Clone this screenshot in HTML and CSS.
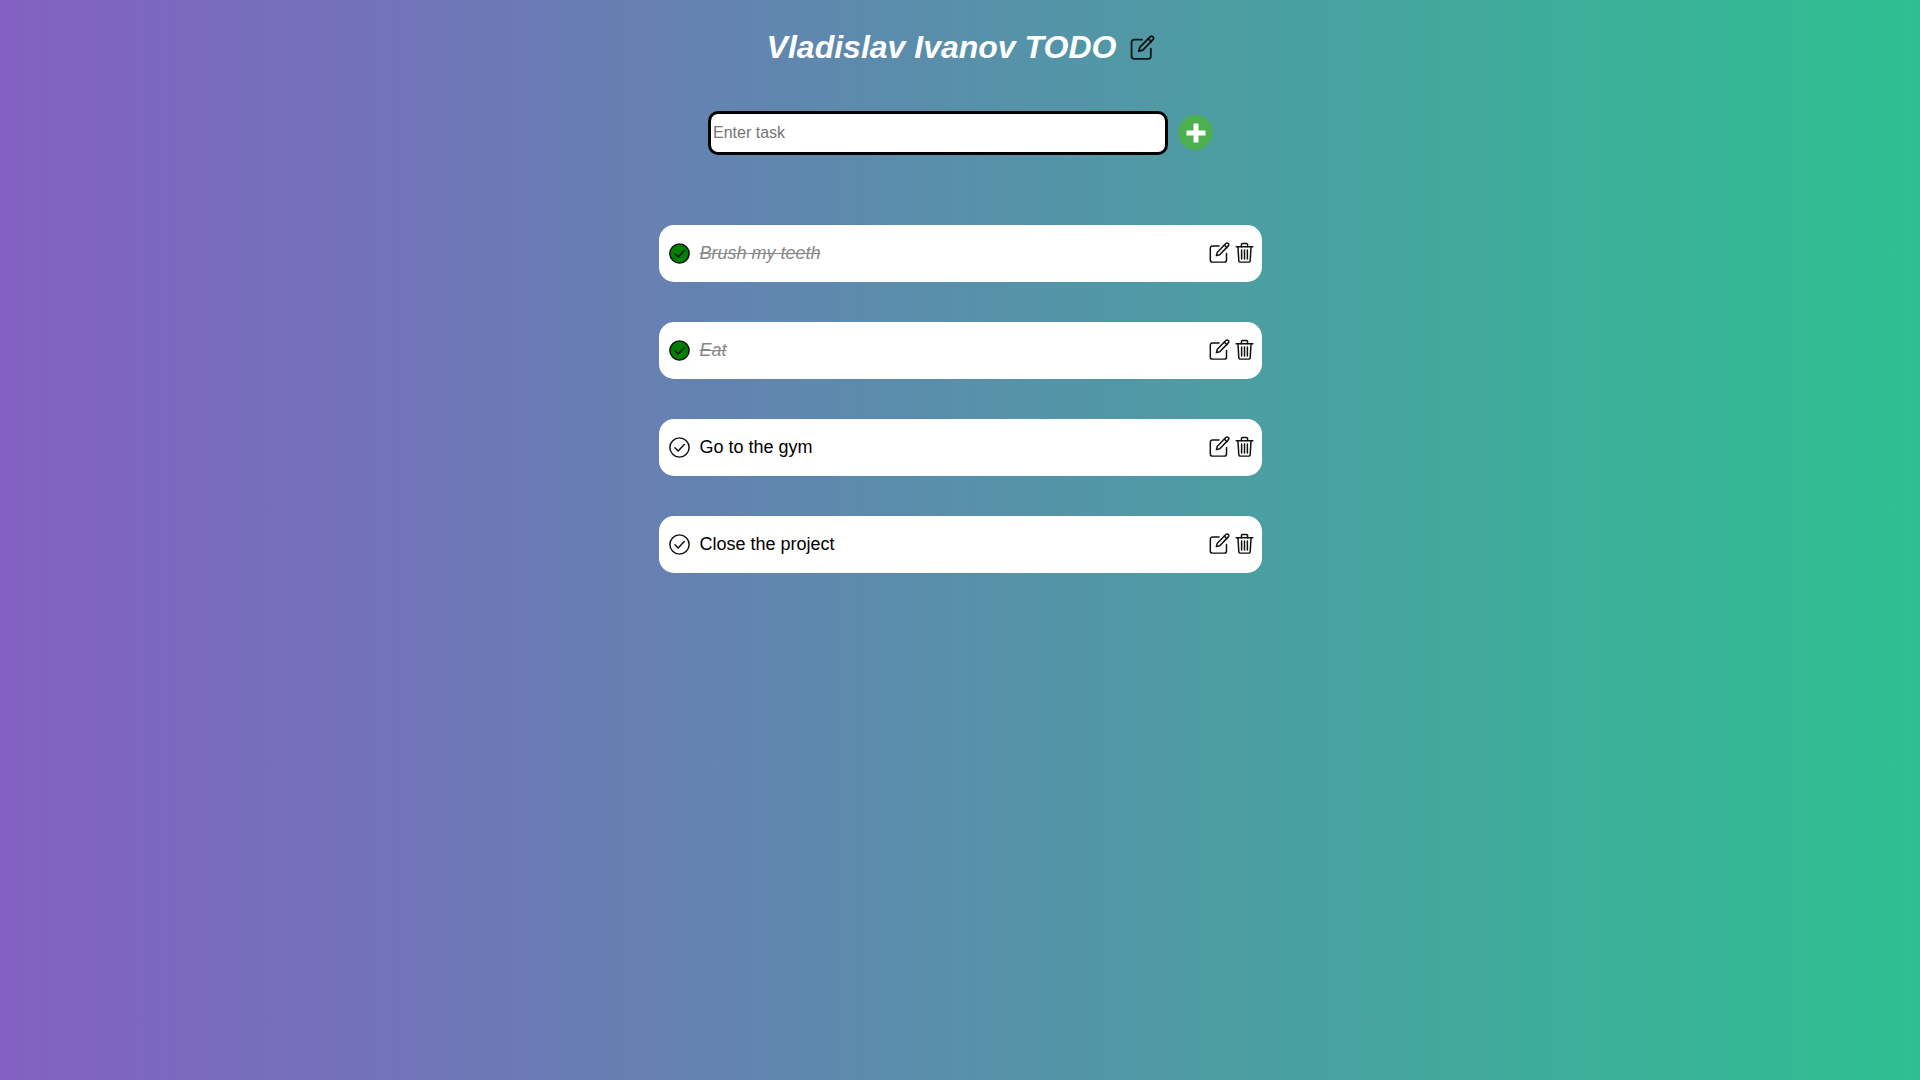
FILE: index.html
```html
<!DOCTYPE html>
<html>

<head>
    <meta charset="UTF-8">
    <title>Vladislav Ivanov TODO</title>
    <link rel="stylesheet" href="styles.css">
</head>

<body>
    <svg class="defs" width="0" height="0">
        <symbol id="edit" viewBox="0 0 24 24">
            <path d="M11.5 4.500H4A2.500 2.500 0 0 0 1.500 7v13.500A2.500 2.500 0 0 0 4 23h13.500a2.500 2.500 0 0 0 2.500-2.500V13" />
            <path d="M19.300 1.700a1.900 1.900 0 0 1 2.700 2.700L12.300 14.500l-3.900 1.100 1.100-3.900z" />
            <path d="M17.500 3.500l3 3" />
        </symbol>
        <symbol id="trash" viewBox="0 0 24 24">
            <path d="M2.500 5.500h19" />
            <path d="M8.500 5.500V2.800a1.200 1.200 0 0 1 1.200-1.200h4.600a1.200 1.200 0 0 1 1.200 1.200v2.700" />
            <path d="M4.500 5.500l1 16a1.800 1.800 0 0 0 1.800 1.500h9.400a1.800 1.800 0 0 0 1.800-1.500l1-16" />
            <path d="M8.700 9v10.500M12 9v10.500M15.300 9v10.500" />
        </symbol>
        <symbol id="check" viewBox="0 0 24 24">
            <circle cx="12" cy="12" r="11" />
            <path d="M6.800 12.300l3.700 3.700 6.900-7.500" />
        </symbol>
    </svg>

    <div class="app">
        <h1 class="title">
            <span>Vladislav Ivanov TODO</span>
            <svg class="icon title-icon"><use href="#edit" /></svg>
        </h1>

        <div class="add-row">
            <input class="task-input" type="text" placeholder="Enter task">
            <button class="add-btn">
                <svg viewBox="0 0 24 24"><path d="M12 2.500v19M2.500 12h19" /></svg>
            </button>
        </div>

        <ul class="tasks">
            <li class="task done">
                <svg class="icon check"><use href="#check" /></svg>
                <span class="task-text">Brush my teeth</span>
                <svg class="icon act"><use href="#edit" /></svg>
                <svg class="icon act"><use href="#trash" /></svg>
            </li>
            <li class="task done">
                <svg class="icon check"><use href="#check" /></svg>
                <span class="task-text">Eat</span>
                <svg class="icon act"><use href="#edit" /></svg>
                <svg class="icon act"><use href="#trash" /></svg>
            </li>
            <li class="task">
                <svg class="icon check"><use href="#check" /></svg>
                <span class="task-text">Go to the gym</span>
                <svg class="icon act"><use href="#edit" /></svg>
                <svg class="icon act"><use href="#trash" /></svg>
            </li>
            <li class="task">
                <svg class="icon check"><use href="#check" /></svg>
                <span class="task-text">Close the project</span>
                <svg class="icon act"><use href="#edit" /></svg>
                <svg class="icon act"><use href="#trash" /></svg>
            </li>
        </ul>
    </div>
</body>

</html>
```

FILE: styles.css
```css
html,
body {
    height: 100%;
}

body {
    margin: 0;
    background: linear-gradient(to right, #8360c3, #2ebf91);
    font-family: "Liberation Sans", Arial, sans-serif;
    color: #000;
}

.defs {
    position: absolute;
}

.icon {
    fill: none;
    stroke: #111;
    stroke-width: 1.7;
    stroke-linecap: round;
    stroke-linejoin: round;
}

.app {
    width: 603px;
    margin: 0 auto;
}

.title {
    display: flex;
    justify-content: center;
    align-items: center;
    gap: 14px;
    margin: 0;
    padding: 29px 0 0 2px;
    height: 36px;
    font-size: 32px;
    font-style: italic;
    font-weight: bold;
    color: #fff;
}

.title-icon {
    width: 25px;
    height: 25px;
}

.add-row {
    display: flex;
    justify-content: center;
    align-items: center;
    gap: 10px;
    margin-top: 46px;
    padding-left: 1px;
}

.task-input {
    box-sizing: border-box;
    width: 460px;
    height: 44px;
    padding: 0 2px;
    border: 3px solid #000;
    border-radius: 10px;
    background: #fff;
    font-family: inherit;
    font-size: 16px;
    outline: none;
}

.add-btn {
    display: flex;
    justify-content: center;
    align-items: center;
    width: 35px;
    height: 35px;
    margin-bottom: 1px;
    padding: 0;
    border: 0;
    border-radius: 50%;
    background: #4caf50;
}

.add-btn svg {
    width: 24px;
    height: 24px;
    fill: none;
    stroke: #fff;
    stroke-width: 5;
}

.tasks {
    list-style: none;
    margin: 70px 0 0 0;
    padding: 0;
}

.task {
    display: flex;
    align-items: center;
    gap: 4px;
    height: 57px;
    margin-bottom: 40px;
    padding: 0 7px 0 10px;
    border-radius: 15px;
    background: #fff;
    font-size: 18px;
}

.check {
    width: 21px;
    height: 21px;
    margin-right: 6px;
}

.task-text {
    flex: 1;
}

.done .task-text {
    color: #888;
    font-style: italic;
    text-decoration: line-through;
}

.done .check {
    fill: #008000;
}

.act {
    width: 21px;
    height: 21px;
    margin-bottom: 2px;
}
```
